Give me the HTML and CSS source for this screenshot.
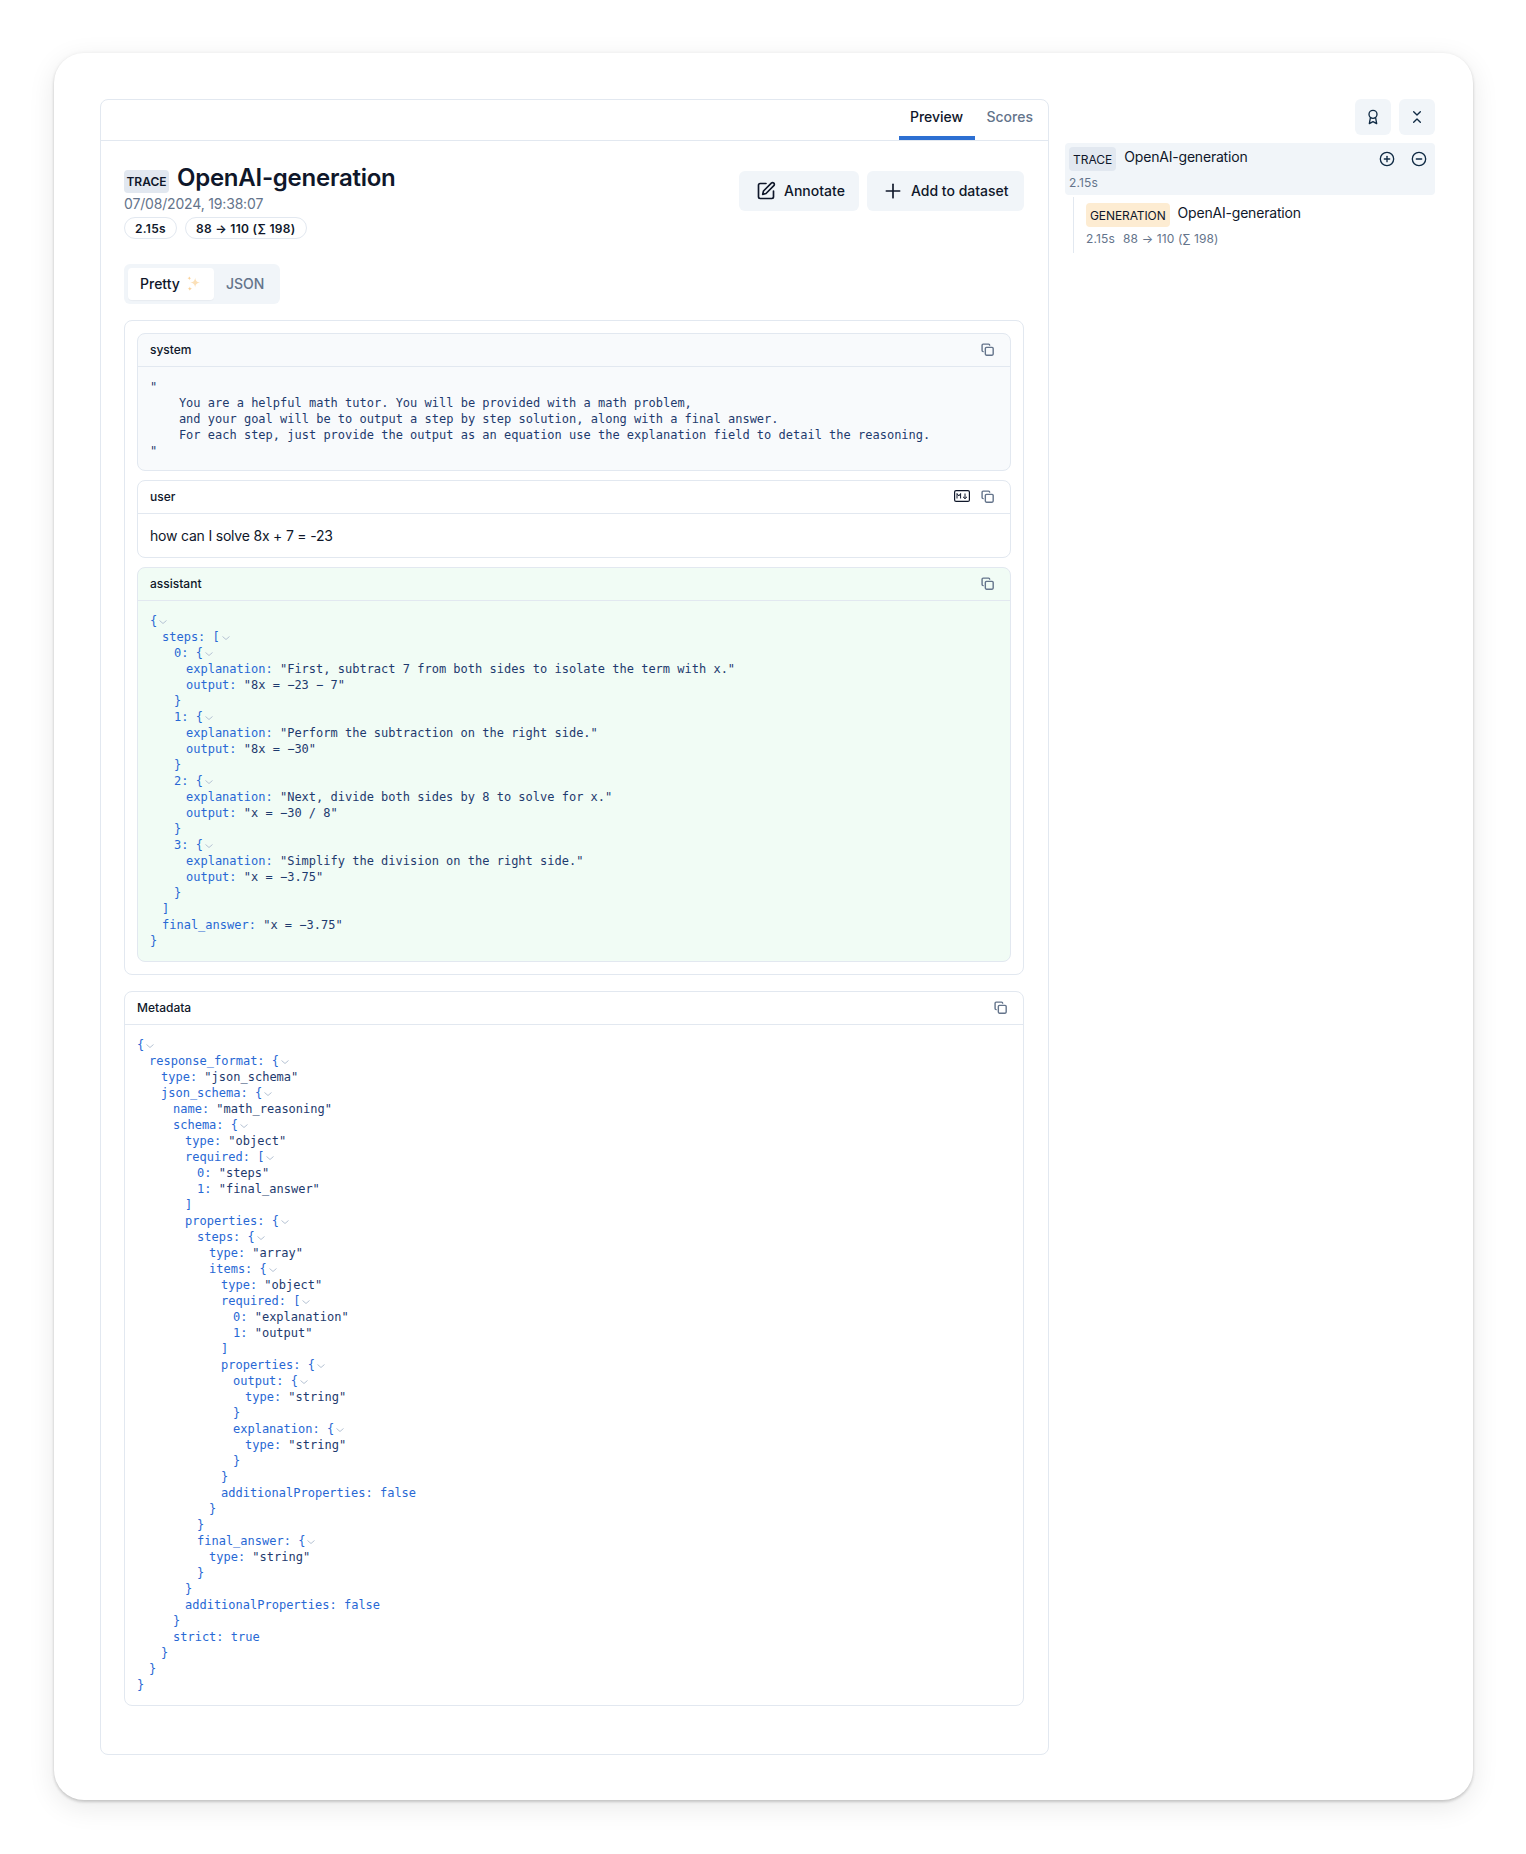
FILE: index.html
```html
<!DOCTYPE html>
<html lang="en">
<head>
<meta charset="utf-8">
<title>OpenAI-generation</title>
<link rel="stylesheet" href="styles.css">
</head>
<body>
<svg class="defs" width="0" height="0" aria-hidden="true">
  <symbol id="copy" viewBox="0 0 24 24"><rect x="8" y="8" width="14.500" height="14.500" rx="2" fill="none" stroke="currentColor" stroke-width="2.600"/><path d="M4 16c-1.100 0-2-.9-2-2V4c0-1.100.9-2 2-2h10c1.100 0 2 .9 2 2" fill="none" stroke="currentColor" stroke-width="2.600" stroke-linecap="round"/></symbol>
  <symbol id="chev" viewBox="0 0 10 10"><path d="M1.500 3.500 5 6.500 8.500 3.500" fill="none" stroke="currentColor" stroke-width="1"/></symbol>
</svg>
<main class="frame">
  <section class="panel">
    <nav class="tabs">
      <a class="tab tab-active">Preview</a>
      <a class="tab">Scores</a>
    </nav>
    <div class="content">
      <header class="head">
        <div class="head-left">
          <div class="title-row"><span class="badge badge-trace">TRACE</span><h1 class="title">OpenAI-generation</h1></div>
          <div class="date">07/08/2024, 19:38:07</div>
          <div class="pills"><span class="pill">2.15s</span><span class="pill">88 → 110 (∑ 198)</span></div>
        </div>
        <div class="actions">
          <button class="btn"><svg class="btn-icon" viewBox="0 0 24 24" fill="none" stroke="currentColor" stroke-width="2" stroke-linecap="round" stroke-linejoin="round"><path d="M12 3H5a2 2 0 0 0-2 2v14a2 2 0 0 0 2 2h14a2 2 0 0 0 2-2v-7"/><path d="M18.400 2.600a2.100 2.100 0 1 1 3 3L12 15l-4 1 1-4Z"/></svg>Annotate</button>
          <button class="btn btn-add"><svg class="btn-icon" viewBox="0 0 24 24" fill="none" stroke="currentColor" stroke-width="2" stroke-linecap="round"><path d="M4 12h16"/><path d="M12 4v16"/></svg>Add to dataset</button>
        </div>
      </header>
      <div class="switch">
        <span class="switch-item switch-on">Pretty <svg class="spark" viewBox="0 0 18 18"><path d="M10.500 2.500c.6 3.400 1.600 4.400 5 5-3.400.6-4.400 1.600-5 5-.6-3.400-1.600-4.400-5-5 3.400-.6 4.400-1.600 5-5Z" fill="#fbe0b8"/><path d="M4.500 1c.2 1.300.7 1.800 2 2-1.300.2-1.800.7-2 2-.2-1.300-.7-1.800-2-2 1.300-.2 1.800-.7 2-2ZM5 11.500c.3 1.500.8 2 2.300 2.300-1.500.3-2 .8-2.300 2.300-.3-1.500-.8-2-2.300-2.300 1.500-.3 2-.8 2.300-2.300Z" fill="#fad29a"/></svg></span>
        <span class="switch-item">JSON</span>
      </div>
      <div class="messages">
        <article class="card card-muted">
          <div class="card-head"><span>system</span><svg class="icon-copy"><use href="#copy"/></svg></div>
          <pre class="plain">"
    You are a helpful math tutor. You will be provided with a math problem,
    and your goal will be to output a step by step solution, along with a final answer.
    For each step, just provide the output as an equation use the explanation field to detail the reasoning.
"</pre>
        </article>
        <article class="card">
          <div class="card-head"><span>user</span><span class="head-icons"><svg class="icon-md" viewBox="0 0 16 12"><rect x=".6" y=".6" width="14.800" height="10.800" rx="1.500" fill="none" stroke="#0f172a" stroke-width="1.200"/><path d="M3 8.500V3.500l1.800 2.500 1.800-2.500v5M11 3.500v5M9 6.800l2 1.900 2-1.900" fill="none" stroke="#0f172a" stroke-width="1"/></svg><svg class="icon-copy"><use href="#copy"/></svg></span></div>
          <p class="user-text">how can I solve 8x + 7 = -23</p>
        </article>
        <article class="card card-green">
          <div class="card-head"><span>assistant</span><svg class="icon-copy"><use href="#copy"/></svg></div>
          <div class="code code-msg">
            <div class="l0"><i>{</i><svg class="chev"><use href="#chev"/></svg></div>
            <div class="l1"><i>steps: [</i><svg class="chev"><use href="#chev"/></svg></div>
            <div class="l2"><i>0: {</i><svg class="chev"><use href="#chev"/></svg></div>
            <div class="l3"><i>explanation:</i> <b>"First, subtract 7 from both sides to isolate the term with x."</b></div>
            <div class="l3"><i>output:</i> <b>"8x = −23 − 7"</b></div>
            <div class="l2"><i>}</i></div>
            <div class="l2"><i>1: {</i><svg class="chev"><use href="#chev"/></svg></div>
            <div class="l3"><i>explanation:</i> <b>"Perform the subtraction on the right side."</b></div>
            <div class="l3"><i>output:</i> <b>"8x = −30"</b></div>
            <div class="l2"><i>}</i></div>
            <div class="l2"><i>2: {</i><svg class="chev"><use href="#chev"/></svg></div>
            <div class="l3"><i>explanation:</i> <b>"Next, divide both sides by 8 to solve for x."</b></div>
            <div class="l3"><i>output:</i> <b>"x = −30 / 8"</b></div>
            <div class="l2"><i>}</i></div>
            <div class="l2"><i>3: {</i><svg class="chev"><use href="#chev"/></svg></div>
            <div class="l3"><i>explanation:</i> <b>"Simplify the division on the right side."</b></div>
            <div class="l3"><i>output:</i> <b>"x = −3.75"</b></div>
            <div class="l2"><i>}</i></div>
            <div class="l1"><i>]</i></div>
            <div class="l1"><i>final_answer:</i> <b>"x = −3.75"</b></div>
            <div class="l0"><i>}</i></div>
          </div>
        </article>
      </div>
      <article class="card card-meta">
        <div class="card-head"><span>Metadata</span><svg class="icon-copy"><use href="#copy"/></svg></div>
        <div class="code code-meta">
          <div class="l0"><i>{</i><svg class="chev"><use href="#chev"/></svg></div>
          <div class="l1"><i>response_format: {</i><svg class="chev"><use href="#chev"/></svg></div>
          <div class="l2"><i>type:</i> <b>"json_schema"</b></div>
          <div class="l2"><i>json_schema: {</i><svg class="chev"><use href="#chev"/></svg></div>
          <div class="l3"><i>name:</i> <b>"math_reasoning"</b></div>
          <div class="l3"><i>schema: {</i><svg class="chev"><use href="#chev"/></svg></div>
          <div class="l4"><i>type:</i> <b>"object"</b></div>
          <div class="l4"><i>required: [</i><svg class="chev"><use href="#chev"/></svg></div>
          <div class="l5"><i>0:</i> <b>"steps"</b></div>
          <div class="l5"><i>1:</i> <b>"final_answer"</b></div>
          <div class="l4"><i>]</i></div>
          <div class="l4"><i>properties: {</i><svg class="chev"><use href="#chev"/></svg></div>
          <div class="l5"><i>steps: {</i><svg class="chev"><use href="#chev"/></svg></div>
          <div class="l6"><i>type:</i> <b>"array"</b></div>
          <div class="l6"><i>items: {</i><svg class="chev"><use href="#chev"/></svg></div>
          <div class="l7"><i>type:</i> <b>"object"</b></div>
          <div class="l7"><i>required: [</i><svg class="chev"><use href="#chev"/></svg></div>
          <div class="l8"><i>0:</i> <b>"explanation"</b></div>
          <div class="l8"><i>1:</i> <b>"output"</b></div>
          <div class="l7"><i>]</i></div>
          <div class="l7"><i>properties: {</i><svg class="chev"><use href="#chev"/></svg></div>
          <div class="l8"><i>output: {</i><svg class="chev"><use href="#chev"/></svg></div>
          <div class="l9"><i>type:</i> <b>"string"</b></div>
          <div class="l8"><i>}</i></div>
          <div class="l8"><i>explanation: {</i><svg class="chev"><use href="#chev"/></svg></div>
          <div class="l9"><i>type:</i> <b>"string"</b></div>
          <div class="l8"><i>}</i></div>
          <div class="l7"><i>}</i></div>
          <div class="l7"><i>additionalProperties: false</i></div>
          <div class="l6"><i>}</i></div>
          <div class="l5"><i>}</i></div>
          <div class="l5"><i>final_answer: {</i><svg class="chev"><use href="#chev"/></svg></div>
          <div class="l6"><i>type:</i> <b>"string"</b></div>
          <div class="l5"><i>}</i></div>
          <div class="l4"><i>}</i></div>
          <div class="l4"><i>additionalProperties: false</i></div>
          <div class="l3"><i>}</i></div>
          <div class="l3"><i>strict: true</i></div>
          <div class="l2"><i>}</i></div>
          <div class="l1"><i>}</i></div>
          <div class="l0"><i>}</i></div>
        </div>
      </article>
    </div>
  </section>
  <aside class="side">
    <div class="side-actions">
      <button class="square"><svg class="icon-16" viewBox="0 0 24 24" fill="none" stroke="currentColor" stroke-width="2" stroke-linejoin="round"><circle cx="12" cy="8" r="6"/><path d="M8 13.500 6.500 22l5.500-3 5.500 3L16 13.500"/></svg></button>
      <button class="square"><svg class="icon-16" viewBox="0 0 24 24" fill="none" stroke="currentColor" stroke-width="2" stroke-linecap="round" stroke-linejoin="round"><path d="m7 20 5-5 5 5"/><path d="m7 4 5 5 5-5"/></svg></button>
    </div>
    <div class="node node-trace">
      <div class="node-row">
        <span class="badge badge-side badge-side-trace">TRACE</span>
        <span class="node-name">OpenAI-generation</span>
        <span class="node-icons">
          <svg class="icon-16" viewBox="0 0 24 24" fill="none" stroke="currentColor" stroke-width="2" stroke-linecap="round"><circle cx="12" cy="12" r="10"/><path d="M8 12h8"/><path d="M12 8v8"/></svg>
          <svg class="icon-16" viewBox="0 0 24 24" fill="none" stroke="currentColor" stroke-width="2" stroke-linecap="round"><circle cx="12" cy="12" r="10"/><path d="M8 12h8"/></svg>
        </span>
      </div>
      <div class="node-meta">2.15s</div>
    </div>
    <div class="node-child">
      <div class="node-row">
        <span class="badge badge-side badge-gen">GENERATION</span>
        <span class="node-name">OpenAI-generation</span>
      </div>
      <div class="node-meta child-meta"><span>2.15s</span><span>88 → 110 (∑ 198)</span></div>
    </div>
  </aside>
</main>
</body>
</html>
```
FILE: styles.css
```css
* { box-sizing: border-box; }
html, body { margin: 0; padding: 0; background: #fff; }
body { font-family: Inter, "Liberation Sans", sans-serif; color: #0f172a; height: 1854px; overflow: hidden; }
.defs { position: absolute; }

.frame {
  margin: 53px 53px 0 54px;
  height: 1747px;
  padding: 46px 38px 45px 46px;
  display: flex;
  gap: 16px;
  align-items: stretch;
  background: #fff;
  border-radius: 30px;
  box-shadow: 0 2px 3px rgba(0,0,0,.16), 0 0 4px rgba(0,0,0,.05), 0 7px 28px rgba(0,0,0,.09);
}

.panel { width: 949px; flex: none; border: 1px solid #e2e8f0; border-radius: 8px; }
.tabs { height: 41px; border-bottom: 1px solid #e2e8f0; display: flex; justify-content: flex-end; padding-right: 3px; }
.tab { height: 40px; padding: 0 12px 7px; display: flex; align-items: center; font-size: 14px; font-weight: 500; color: #64748b; }
.tab-active { color: #0f172a; border-bottom: 4px solid #2d6fd2; padding-bottom: 3px; width: 76px; justify-content: center; letter-spacing: -.05px; }

.content { padding: 27px 24px 0 23px; }
.head { display: flex; justify-content: space-between; align-items: flex-start; }
.title-row { display: flex; align-items: center; gap: 8px; height: 24px; }
.title { margin: 0; font-size: 24px; line-height: 24px; font-weight: 600; letter-spacing: -.25px; position: relative; top: -2px; }
.badge { display: inline-flex; align-items: center; justify-content: center; border-radius: 4px; font-size: 12px; font-weight: 500; }
.badge-trace { width: 45px; height: 23px; background: #e2e8f0; font-weight: 600; margin-top: 2px; }
.date { margin-top: 2px; font-size: 14px; line-height: 20px; color: #64748b; height: 19px; letter-spacing: -.17px; }
.pills { display: flex; gap: 8px; margin-top: 4px; }
.pill { height: 22px; padding: 0 10px; border: 1px solid #e2e8f0; border-radius: 11px; font-size: 12px; font-weight: 600; display: flex; align-items: center; letter-spacing: .3px; }

.actions { display: flex; gap: 8px; margin-top: 3px; }
.btn { height: 40px; width: 120px; padding: 0 0 0 17px; border: 0; border-radius: 6px; background: #f1f5f9; font: 500 14px/20px Inter, sans-serif; color: #0f172a; display: flex; align-items: center; gap: 8px; white-space: nowrap; }
.btn-icon { width: 20px; height: 20px; flex: none; }
.btn-add { width: 157px; padding-left: 16px; }

.switch { margin-top: 25px; width: 156px; height: 40px; padding: 4px; border-radius: 6px; background: #f1f5f9; display: flex; }
.switch-item { height: 32px; display: flex; align-items: center; padding: 0 12px 1px; font-size: 14px; font-weight: 500; color: #64748b; border-radius: 4px; white-space: pre; }
.switch-on { width: 86px; background: #fff; color: #0f172a; box-shadow: 0 1px 1px rgba(15,23,42,.04); }
.spark { width: 18px; height: 18px; margin-left: 1px; }

.messages { margin-top: 16px; border: 1px solid #e2e8f0; border-radius: 8px; padding: 12px; display: flex; flex-direction: column; gap: 9px; }
.card { border: 1px solid #e2e8f0; border-radius: 8px; overflow: hidden; }
.card-muted { background: #f8fafc; }
.card-green { background: #f1fcf5; }
.card-meta { margin-top: 16px; height: 715px; }
.card-head { height: 33px; padding: 0 16px 2px 12px; border-bottom: 1px solid #e2e8f0; display: flex; align-items: center; justify-content: space-between; font-size: 12px; font-weight: 500; }
.head-icons { display: flex; align-items: center; gap: 11px; }
.icon-copy { width: 13px; height: 13px; color: #64748b; }
.icon-md { width: 16px; height: 12px; }

.plain, .code { margin: 0; font-family: "DejaVu Sans Mono", monospace; font-size: 12px; line-height: 16px; }
.plain { padding: 12px 12px 11px; color: #1e3a6e; white-space: pre; }
.user-text { margin: 0; height: 43px; padding: 0 12px; display: flex; align-items: center; font-size: 14px; line-height: 20px; letter-spacing: -.2px; }
.code-msg { padding: 12px; }
.code-meta { padding: 12px 12px 11px; }
.code i { font-style: normal; color: #2868d4; }
.code b { font-weight: 400; color: #1e3a6e; }
.chev { width: 10px; height: 10px; margin-left: 1px; color: #b6c3d4; vertical-align: -2px; }
.l1 { padding-left: 12px; }
.l2 { padding-left: 24px; }
.l3 { padding-left: 36px; }
.l4 { padding-left: 48px; }
.l5 { padding-left: 60px; }
.l6 { padding-left: 72px; }
.l7 { padding-left: 84px; }
.l8 { padding-left: 96px; }
.l9 { padding-left: 108px; }

.side { width: 370px; flex: none; }
.side-actions { display: flex; justify-content: flex-end; gap: 8px; }
.square { width: 36px; height: 36px; border: 0; padding: 0; border-radius: 6px; background: #f1f5f9; color: #0f172a; display: flex; align-items: center; justify-content: center; }
.icon-16 { width: 16px; height: 16px; color: #0f2a44; flex: none; }
.node-trace { margin-top: 8px; height: 52px; padding: 4px; background: #f1f5f9; border-radius: 4px; }
.node-row { display: flex; align-items: flex-start; gap: 8px; height: 24px; }
.badge-side { height: 24px; padding: 0 4px; font-weight: 400; }
.badge-side-trace { background: #e2e8f0; }
.badge-gen { background: #fdecd2; letter-spacing: -.1px; }
.node-name { font-size: 14px; line-height: 20px; letter-spacing: -.2px; }
.node-icons { margin-left: auto; display: flex; gap: 16px; padding: 4px 4px 0 0; }
.node-meta { font-size: 12px; line-height: 16px; margin-top: 4px; color: #64748b; letter-spacing: .15px; }
.node-child { margin: 2px 0 0 8px; height: 56px; border-left: 1px solid #e2e8f0; padding: 6px 0 0 12px; }
.child-meta { margin-top: 4px; display: flex; gap: 8px; }
```
